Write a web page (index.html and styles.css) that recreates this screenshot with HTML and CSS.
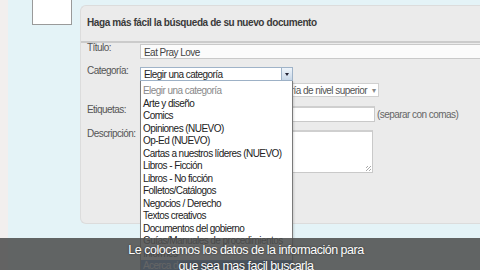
FILE: index.html
```html
<!DOCTYPE html>
<html lang="es">
<head>
    <meta charset="UTF-8">
    <meta name="viewport" content="width=device-width, initial-scale=1.0">
    <title>Nuevo documento</title>
    <link rel="stylesheet" href="styles.css">
</head>
<body>
    <div class="page">
        <div class="thumb"></div>
        <section class="panel">
            <h2 class="panel-head">Haga más fácil la búsqueda de su nuevo documento</h2>
            <div class="form">
                <div class="row row-title">
                    <label>Título:</label>
                    <div class="field field-wide">Eat Pray Love</div>
                </div>
                <div class="row row-cat">
                    <label>Categoría:</label>
                    <div class="select select-cat">Elegir una categoría<span class="arrow"></span></div>
                </div>
                <div class="row row-sub">
                    <label></label>
                    <div class="select select-sub"><span>Seleccione una subcategoría de nivel superior</span><span class="caret">&#9662;</span></div>
                </div>
                <div class="row row-tags">
                    <label>Etiquetas:</label>
                    <div class="field field-tags"></div>
                    <span class="hint">(separar con comas)</span>
                </div>
                <div class="row row-desc">
                    <label>Descripción:</label>
                    <div class="textarea"><span class="grip"></span></div>
                </div>
            </div>

            <ul class="dropdown">
                <li class="placeholder">Elegir una categoría</li>
                <li>Arte y diseño</li>
                <li>Comics</li>
                <li>Opiniones (NUEVO)</li>
                <li>Op-Ed (NUEVO)</li>
                <li>Cartas a nuestros líderes (NUEVO)</li>
                <li>Libros - Ficción</li>
                <li>Libros - No ficción</li>
                <li>Folletos/Catálogos</li>
                <li>Negocios / Derecho</li>
                <li>Textos creativos</li>
                <li>Documentos del gobierno</li>
                <li>Guías/Manuales de procedimientos</li>
                <li>Informes</li>
                <li class="active">Acerca de</li>
            </ul>
        </section>
    </div>

    <div class="subtitles">
        <p>Le colocamos los datos de la información para</p>
        <p>que sea mas facil buscarla</p>
    </div>
</body>
</html>
```

FILE: styles.css
```css
body {
    margin: 0;
    width: 480px;
    height: 270px;
    overflow: hidden;
    position: relative;
    font-family: "Liberation Sans", Arial, sans-serif;
    background: linear-gradient(to right, #f2efee 0, #f2efee 8px, #e4f3f7 8px);
}
.page {
    display: flex;
    align-items: flex-start;
    gap: 8px;
    padding-left: 32px;
}
.thumb {
    width: 38px;
    height: 24px;
    background-color: #fff;
    border: 1px solid #9a9a9a;
    border-top: none;
}
.panel {
    position: relative;
    flex: 1;
    margin-top: 5px;
    height: 219px;
    background-color: #ebebeb;
    border: 1px solid #dcdcdc;
    border-right: none;
    border-radius: 6px 0 0 6px;
    box-sizing: border-box;
}
.panel-head {
    margin: 0;
    height: 35px;
    line-height: 34px;
    padding-left: 6px;
    font-size: 10px;
    letter-spacing: -0.4px;
    font-weight: bold;
    color: #3a3a3a;
    border-bottom: 2px solid #cbcbcb;
}
.form {
    padding-left: 6px;
    font-size: 10px;
    letter-spacing: -0.55px;
}
.row {
    display: flex;
    align-items: flex-start;
}
.row-title {
    margin-top: 1px;
}
.row label {
    width: 53px;
    flex: none;
    margin-top: -2px;
    line-height: 11px;
    color: #555;
}
.field,
.select,
.textarea {
    box-sizing: border-box;
    background-color: #fff;
    border: 1px solid #c9c9c9;
    color: #444;
}
.field-wide {
    flex: 1;
    height: 15px;
    line-height: 14px;
    padding: 1px 0 0 3px;
    border-right: none;
    background-color: #fbfbfb;
}
.row-cat {
    margin-top: 8px;
}
.select {
    position: relative;
    height: 14px;
    line-height: 13px;
    padding-left: 3px;
    white-space: nowrap;
    overflow: hidden;
}
.select-cat {
    width: 153px;
    color: #1e1e1e;
    border-color: #9fb3c8;
}
.arrow {
    position: absolute;
    right: 0;
    top: 0;
    width: 10px;
    height: 12px;
    background: linear-gradient(#eef4fa, #c9d8e8);
    border-left: 1px solid #9fb3c8;
}
.arrow::after {
    content: "";
    position: absolute;
    left: 3px;
    top: 5px;
    border-left: 2px solid transparent;
    border-right: 2px solid transparent;
    border-top: 3px solid #223;
}
.row-sub {
    margin-top: 2px;
}
.select-sub {
    display: flex;
    justify-content: flex-end;
    width: 239px;
    padding-right: 11px;
    color: #555;
    border-color: #d0d0d0;
}
.caret {
    position: absolute;
    right: 3px;
    top: 0;
    font-size: 8px;
    color: #888;
}
.row-tags {
    margin-top: 9px;
}
.field-tags {
    width: 235px;
    height: 16px;
    border-top: 2px solid #cfcfcf;
}
.hint {
    margin-left: 2px;
    line-height: 17px;
    color: #666;
}
.row-desc {
    margin-top: 7px;
}
.textarea {
    position: relative;
    width: 233px;
    height: 43px;
    border-top: 2px solid #cfcfcf;
}
.grip {
    position: absolute;
    right: 1px;
    bottom: 1px;
    width: 5px;
    height: 5px;
    background: repeating-linear-gradient(135deg, transparent 0 1px, #aaa 1px 2px);
}
.dropdown {
    position: absolute;
    left: 59px;
    top: 75px;
    width: 153px;
    height: 200px;
    margin: 0;
    padding: 4px 0 0;
    list-style: none;
    box-sizing: border-box;
    background-color: #fff;
    border: 1px solid #7a7a7a;
    border-top: none;
    font-size: 10px;
    letter-spacing: -0.55px;
    color: #222;
    box-shadow: 1px 1px 2px rgba(0, 0, 0, 0.15);
}
.dropdown li {
    height: 12.5px;
    line-height: 12.5px;
    padding-left: 2px;
    white-space: nowrap;
}
.dropdown .placeholder {
    color: #8a8a8a;
}
.dropdown .active {
    background-color: #3a78c8;
    color: #fff;
}
.subtitles {
    position: absolute;
    left: 0;
    right: 0;
    top: 238px;
    height: 32px;
    padding: 4px 0 0 12px;
    box-sizing: border-box;
    background-color: rgba(78, 80, 80, 0.88);
    text-align: center;
    color: #fff;
    font-size: 12.5px;
    letter-spacing: -0.5px;
    line-height: 16px;
    text-shadow: 0 0 2px rgba(0, 0, 0, 0.6);
}
.subtitles p {
    margin: 0;
}
```
